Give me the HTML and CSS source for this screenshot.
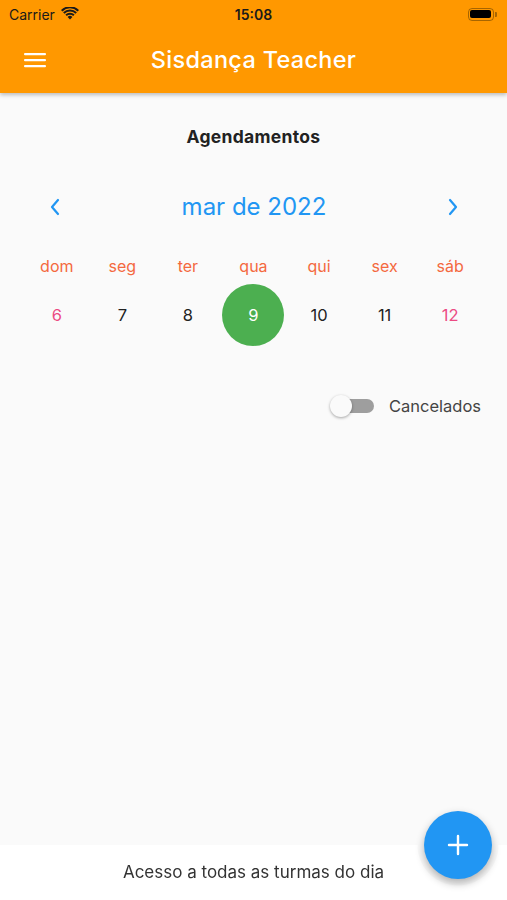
FILE: index.html
```html
<!DOCTYPE html>
<html lang="pt">
<head>
    <meta charset="UTF-8">
    <meta name="viewport" content="width=device-width, initial-scale=1.0">
    <title>Sisdança Teacher</title>
    <link rel="stylesheet" href="styles.css">
</head>
<body>
    <header class="top">
        <div class="status-bar">
            <div class="status-left">
                <span>Carrier</span>
                <svg class="wifi" width="18" height="13" viewBox="0 0 18 13">
                    <path d="M9 12.5 L6.6 9.9 A3.4 3.4 0 0 1 11.4 9.9 Z" fill="#1a1a1a"/>
                    <path d="M4.4 7.6 A6.6 6.6 0 0 1 13.6 7.6 L12.2 9.1 A4.6 4.6 0 0 0 5.8 9.1 Z" fill="#1a1a1a"/>
                    <path d="M2.1 5.2 A9.9 9.9 0 0 1 15.9 5.2 L14.5 6.7 A7.9 7.9 0 0 0 3.5 6.7 Z" fill="#1a1a1a"/>
                    <path d="M0 2.9 A13 13 0 0 1 18 2.9 L16.6 4.4 A11 11 0 0 0 1.4 4.4 Z" fill="#1a1a1a"/>
                </svg>
            </div>
            <div class="status-time">15:08</div>
            <div class="status-right">
                <div class="battery"><div class="battery-fill"></div></div>
                <div class="battery-tip"></div>
            </div>
        </div>
        <div class="app-bar">
            <button class="menu-btn" aria-label="menu">
                <svg width="24" height="18" viewBox="0 0 24 18">
                    <rect x="1" y="2" width="22" height="2.2" rx="1" fill="#fff"/>
                    <rect x="1" y="8" width="22" height="2.2" rx="1" fill="#fff"/>
                    <rect x="1" y="14" width="22" height="2.2" rx="1" fill="#fff"/>
                </svg>
            </button>
            <h1 class="app-title">Sisdança Teacher</h1>
        </div>
    </header>

    <main class="content">
        <h2 class="section-title">Agendamentos</h2>

        <div class="month-nav">
            <svg class="chev" width="12" height="18" viewBox="0 0 12 18">
                <path d="M9 2 L3 9 L9 16" fill="none" stroke="#2196F3" stroke-width="2.2" stroke-linecap="round" stroke-linejoin="round"/>
            </svg>
            <span class="month-label">mar de 2022</span>
            <svg class="chev" width="12" height="18" viewBox="0 0 12 18">
                <path d="M3 2 L9 9 L3 16" fill="none" stroke="#2196F3" stroke-width="2.2" stroke-linecap="round" stroke-linejoin="round"/>
            </svg>
        </div>

        <div class="week">
            <span class="weekday">dom</span>
            <span class="weekday">seg</span>
            <span class="weekday">ter</span>
            <span class="weekday">qua</span>
            <span class="weekday">qui</span>
            <span class="weekday">sex</span>
            <span class="weekday">sáb</span>

            <span class="day weekend">6</span>
            <span class="day">7</span>
            <span class="day">8</span>
            <span class="day selected">9</span>
            <span class="day">10</span>
            <span class="day">11</span>
            <span class="day weekend">12</span>
        </div>

        <div class="filter-row">
            <div class="switch"><div class="switch-thumb"></div></div>
            <span class="filter-label">Cancelados</span>
        </div>
    </main>

    <footer class="bottom-bar">
        <span>Acesso a todas as turmas do dia</span>
    </footer>

    <button class="fab" aria-label="adicionar">
        <svg width="22" height="22" viewBox="0 0 22 22">
            <path d="M11 2 V20 M2 11 H20" stroke="#fff" stroke-width="2.4" stroke-linecap="round"/>
        </svg>
    </button>
</body>
</html>
```

FILE: styles.css
```css
:root {
    --orange: #FF9800;
    --blue: #2196F3;
    --weekday: #F4693F;
    --weekend: #EC4B83;
    --green: #4CAF50;
}

* {
    box-sizing: border-box;
}

html, body {
    height: 100%;
}

body {
    margin: 0;
    background-color: #FAFAFA;
    font-family: Inter, "Noto Sans", "Liberation Sans", sans-serif;
    color: #222;
    display: flex;
    flex-direction: column;
    overflow: hidden;
    position: relative;
}

.top {
    background: var(--orange);
    box-shadow: 0 2px 4px rgba(0, 0, 0, 0.25);
    position: relative;
    z-index: 2;
}

.status-bar {
    height: 28px;
    display: flex;
    align-items: center;
    justify-content: space-between;
    padding: 0 9px;
    font-size: 14px;
    color: #1a1a1a;
}

.status-left {
    display: flex;
    align-items: center;
    gap: 6px;
    width: 100px;
}

.wifi {
    margin-top: -2px;
}

.status-time {
    font-weight: 600;
    font-size: 14px;
}

.status-right {
    width: 100px;
    display: flex;
    justify-content: flex-end;
    align-items: center;
    padding-right: 1px;
}

.battery {
    width: 26px;
    height: 13px;
    border: 1.5px solid rgba(60, 40, 0, 0.45);
    border-radius: 4px;
    padding: 1.5px;
}

.battery-fill {
    width: 100%;
    height: 100%;
    background: #000;
    border-radius: 2px;
}

.battery-tip {
    width: 2px;
    height: 5px;
    background: rgba(60, 40, 0, 0.45);
    border-radius: 0 1px 1px 0;
    margin-left: 1px;
}

.app-bar {
    height: 65px;
    display: flex;
    align-items: center;
    position: relative;
    padding-bottom: 2px;
}

.menu-btn {
    border: none;
    background: none;
    padding: 0;
    margin-left: 23px;
    display: flex;
    z-index: 1;
}

.app-title {
    position: absolute;
    left: 0;
    right: 0;
    margin: 0;
    text-align: center;
    color: #fff;
    font-size: 23.5px;
    font-weight: 500;
    letter-spacing: 0.3px;
}

.content {
    flex: 1;
    display: flex;
    flex-direction: column;
    padding: 0 24px;
}

.section-title {
    margin: 33px 0 0;
    text-align: center;
    font-size: 17.5px;
    font-weight: 700;
    letter-spacing: 0.3px;
    color: #222;
}

.month-nav {
    display: flex;
    align-items: center;
    justify-content: space-between;
    padding: 0 24px 0 25px;
    margin-top: 45px;
}

.month-label {
    color: var(--blue);
    font-size: 24px;
    font-weight: 400;
}

.week {
    display: grid;
    grid-template-columns: repeat(7, 1fr);
    margin-top: 34px;
    align-items: center;
    justify-items: center;
}

.weekday {
    color: var(--weekday);
    font-size: 16px;
    height: 22px;
    line-height: 22px;
}

.day {
    width: 62px;
    height: 62px;
    border-radius: 50%;
    display: flex;
    align-items: center;
    justify-content: center;
    font-size: 16.5px;
    color: #222;
    margin-top: 7px;
}

.day.weekend {
    color: var(--weekend);
}

.day.selected {
    background: var(--green);
    color: #fff;
}

.filter-row {
    display: flex;
    align-items: center;
    justify-content: flex-end;
    gap: 15px;
    margin-top: 48px;
    margin-right: 2px;
}

.switch {
    width: 44px;
    height: 24px;
    position: relative;
    display: flex;
    align-items: center;
    justify-content: flex-end;
}

.switch::before {
    content: "";
    width: 34px;
    height: 14px;
    background: #9E9E9E;
    border-radius: 7px;
}

.switch-thumb {
    position: absolute;
    left: 0;
    top: 1px;
    width: 22px;
    height: 22px;
    border-radius: 50%;
    background: #FAFAFA;
    box-shadow: 0 1px 3px rgba(0, 0, 0, 0.35);
}

.filter-label {
    font-size: 16.5px;
    color: #444;
}

.bottom-bar {
    height: 55px;
    background: #fff;
    display: flex;
    align-items: center;
    justify-content: center;
    font-size: 17px;
    color: #333;
    padding-bottom: 1px;
    box-shadow: 0 -1px 4px rgba(0, 0, 0, 0.06);
    -webkit-mask: radial-gradient(circle at 458px 0, transparent 40px, #000 41px);
    mask: radial-gradient(circle at 458px 0, transparent 40px, #000 41px);
}

.fab {
    position: absolute;
    left: 424px;
    top: 811px;
    width: 68px;
    height: 68px;
    border-radius: 50%;
    border: none;
    background: var(--blue);
    display: flex;
    align-items: center;
    justify-content: center;
    box-shadow: 0 4px 8px rgba(0, 0, 0, 0.3);
}
```
